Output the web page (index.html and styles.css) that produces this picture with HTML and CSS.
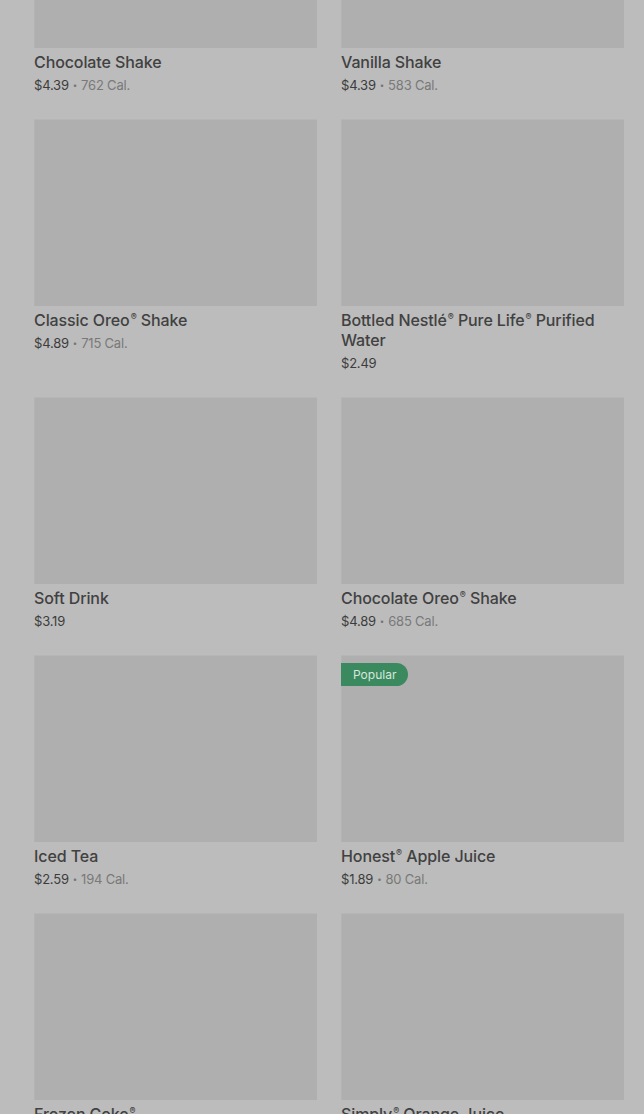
FILE: index.html
```html
<!DOCTYPE html>
<html>
<head>
<meta charset="utf-8">
<link rel="stylesheet" href="styles.css">
</head>
<body>
<div class="page">
  <div class="grid">
    <div class="card">
      <div class="img"></div>
      <div class="title">Chocolate Shake</div>
      <div class="meta"><span class="price">$4.39</span><span class="dot">•</span><span class="cal">762 Cal.</span></div>
    </div>
    <div class="card">
      <div class="img"></div>
      <div class="title">Vanilla Shake</div>
      <div class="meta"><span class="price">$4.39</span><span class="dot">•</span><span class="cal">583 Cal.</span></div>
    </div>
    <div class="card">
      <div class="img"></div>
      <div class="title">Classic Oreo<span class="reg">®</span> Shake</div>
      <div class="meta"><span class="price">$4.89</span><span class="dot">•</span><span class="cal">715 Cal.</span></div>
    </div>
    <div class="card">
      <div class="img"></div>
      <div class="title">Bottled Nestlé<span class="reg">®</span> Pure Life<span class="reg">®</span> Purified Water</div>
      <div class="meta"><span class="price">$2.49</span></div>
    </div>
    <div class="card">
      <div class="img"></div>
      <div class="title">Soft Drink</div>
      <div class="meta"><span class="price">$3.19</span></div>
    </div>
    <div class="card">
      <div class="img"></div>
      <div class="title">Chocolate Oreo<span class="reg">®</span> Shake</div>
      <div class="meta"><span class="price">$4.89</span><span class="dot">•</span><span class="cal">685 Cal.</span></div>
    </div>
    <div class="card">
      <div class="img"></div>
      <div class="title">Iced Tea</div>
      <div class="meta"><span class="price">$2.59</span><span class="dot">•</span><span class="cal">194 Cal.</span></div>
    </div>
    <div class="card">
      <div class="img"><span class="badge">Popular</span></div>
      <div class="title">Honest<span class="reg">®</span> Apple Juice</div>
      <div class="meta"><span class="price">$1.89</span><span class="dot">•</span><span class="cal">80 Cal.</span></div>
    </div>
    <div class="card">
      <div class="img"></div>
      <div class="title">Frozen Coke<span class="reg">®</span></div>
      <div class="meta"><span class="price">$2.99</span></div>
    </div>
    <div class="card">
      <div class="img"></div>
      <div class="title">Simply<span class="reg">®</span> Orange Juice</div>
      <div class="meta"><span class="price">$2.89</span></div>
    </div>
  </div>
</div>
</body>
</html>
```

FILE: styles.css
```css
html, body {
  margin: 0;
  padding: 0;
  background: #bcbcbc;
  overflow: hidden;
  height: 1114px;
}
body {
  font-family: Inter, "Noto Sans", "Liberation Sans", sans-serif;
}
.page {
  padding: 0 20px 0 34px;
}
.grid {
  margin-top: -139px;
  display: grid;
  grid-template-columns: 283px 283px;
  column-gap: 24px;
  row-gap: 24px;
}
.card {
  display: flex;
  flex-direction: column;
}
.img {
  position: relative;
  height: 187px;
  background: #afafaf;
  box-shadow: inset 0 1px 0 #b6b6b6, inset 1px 0 0 #b3b3b3;
}
.badge {
  position: absolute;
  top: 8px;
  left: 0;
  height: 23px;
  line-height: 23px;
  padding: 0 12px 0 12px;
  background: #3b8a5f;
  color: #d8e6dd;
  font-size: 12px;
  border-radius: 0 12px 12px 0;
}
.title {
  margin-top: 4px;
  font-size: 16px;
  line-height: 20px;
  font-weight: 500;
  color: #414141;
  letter-spacing: -0.1px;
}
.reg {
  font-size: 9px;
  line-height: 0;
  vertical-align: 6px;
  margin-left: 1px;
}
.meta {
  margin-top: 3px;
  font-size: 13px;
  line-height: 20px;
  display: flex;
  align-items: center;
  letter-spacing: -0.2px;
}
.price {
  color: #3c3c3c;
}
.dot {
  color: #767676;
  font-size: 8px;
  margin: 0 4px;
}
.cal {
  color: #797979;
}
```
